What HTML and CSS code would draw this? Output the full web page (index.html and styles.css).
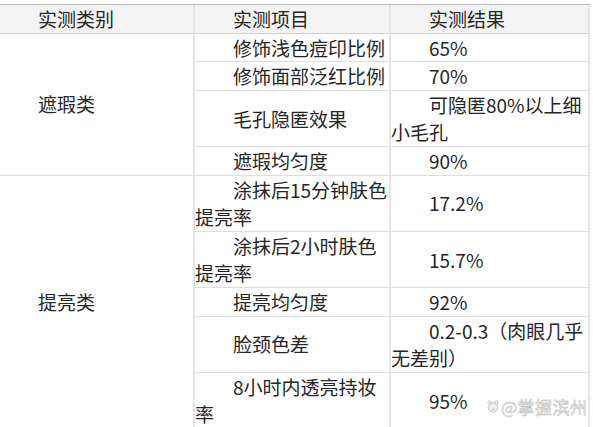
FILE: index.html
```html
<!DOCTYPE html>
<html lang="zh">
<head>
<meta charset="utf-8">
<title>实测结果</title>
<link rel="stylesheet" href="styles.css">
</head>
<body>
<div class="page">
  <table class="grid">
    <colgroup>
      <col class="c1"><col class="c2"><col class="c3">
    </colgroup>
    <thead>
      <tr class="head">
        <th>实测类别</th>
        <th>实测项目</th>
        <th>实测结果</th>
      </tr>
    </thead>
    <tbody>
      <tr>
        <td class="cat" rowspan="4">遮瑕类</td>
        <td>修饰浅色痘印比例</td>
        <td>65%</td>
      </tr>
      <tr>
        <td>修饰面部泛红比例</td>
        <td>70%</td>
      </tr>
      <tr>
        <td>毛孔隐匿效果</td>
        <td>可隐匿80%以上细小毛孔</td>
      </tr>
      <tr class="end">
        <td>遮瑕均匀度</td>
        <td>90%</td>
      </tr>
      <tr>
        <td class="cat" rowspan="5">提亮类</td>
        <td>涂抹后15分钟肤色提亮率</td>
        <td>17.2%</td>
      </tr>
      <tr>
        <td>涂抹后2小时肤色提亮率</td>
        <td>15.7%</td>
      </tr>
      <tr>
        <td>提亮均匀度</td>
        <td>92%</td>
      </tr>
      <tr>
        <td>脸颈色差</td>
        <td>0.2-0.3（肉眼几乎无差别）</td>
      </tr>
      <tr>
        <td>8小时内透亮持妆率</td>
        <td>95%</td>
      </tr>
    </tbody>
  </table>
  <div class="mark">
    <svg class="mark-logo" width="12" height="13" viewBox="0 0 12 13">
      <circle cx="6" cy="7.5" r="4.6" fill="#f2f2f2" stroke="#bcbcbc" stroke-width="0.9"/>
      <circle cx="2.6" cy="2.6" r="1.7" fill="#f2f2f2" stroke="#bcbcbc" stroke-width="0.9"/>
      <circle cx="9.4" cy="2.6" r="1.7" fill="#f2f2f2" stroke="#bcbcbc" stroke-width="0.9"/>
      <path d="M3.8 9 Q6 10.8 8.2 9" stroke="#bcbcbc" stroke-width="0.9" fill="none"/>
    </svg>
    <span class="mark-text">@掌握滨州</span>
  </div>
</div>
</body>
</html>
```

FILE: styles.css
```css
html, body {
  margin: 0;
  padding: 0;
  background: #ffffff;
}

.page {
  position: relative;
  width: 593px;
  height: 427px;
  overflow: hidden;
  padding-top: 4px;
  box-sizing: border-box;
}

.grid {
  border-collapse: separate;
  border-spacing: 0;
  table-layout: fixed;
  width: 590px;
  border-top: 1px solid #b9b9b9;
  font-family: "Noto Sans CJK SC", "Noto Sans", sans-serif;
  font-size: 19px;
  line-height: 27.6px;
  color: #262626;
}

.c1 { width: 195px; }
.c2 { width: 196px; }
.c3 { width: 199px; }

.grid th,
.grid td {
  padding: 0;
  text-align: left;
  text-indent: 2em;
  font-weight: normal;
  vertical-align: middle;
  border-right: 2px solid #e4e4e4;
  border-bottom: 1px solid #dedede;
}

.head th {
  background: #f3f3f3;
  border-bottom: 1px solid #d2d2d2;
}

.grid .cat {
  border-bottom: 1px solid #dcdcdc;
}

.mark {
  position: absolute;
  left: 487px;
  top: 397px;
  display: flex;
  align-items: center;
  gap: 2px;
}

.mark-text {
  font-family: "Noto Sans CJK SC", sans-serif;
  font-size: 17px;
  line-height: 19px;
  letter-spacing: 0.5px;
  color: #f2f2f2;
  -webkit-text-stroke: 0.5px #b8b8b8;
}
```
